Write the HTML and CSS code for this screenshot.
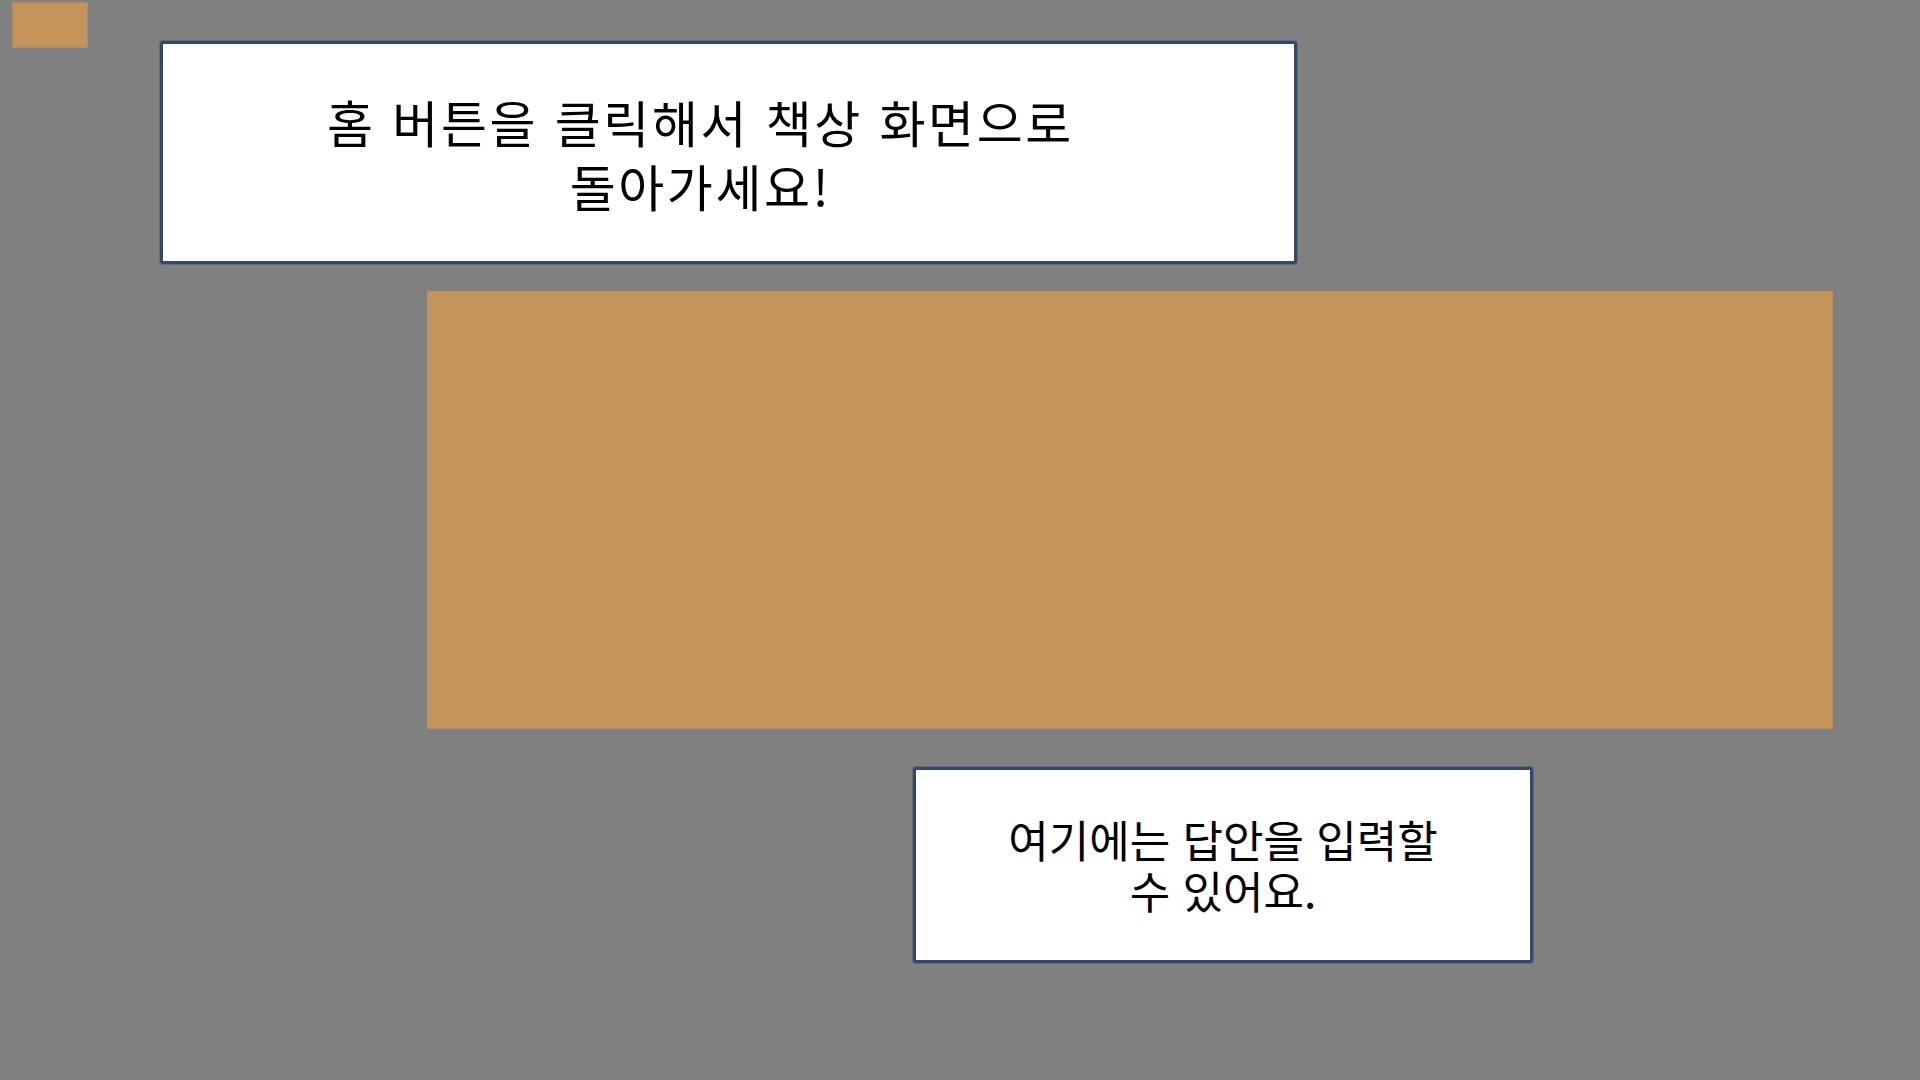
FILE: index.html
```html
<!DOCTYPE html>
<html lang="ko">

<head>
    <meta charset="UTF-8">
    <meta name="viewport" content="width=device-width, initial-scale=1.0">
    <title>책상</title>
    <link rel="stylesheet" href="styles.css">
</head>

<body>
    <div class="stage">
        <div class="homebtn"></div>

        <div class="note note-top">
            <p>홈 버튼을 클릭해서 책상 화면으로<br>돌아가세요!</p>
        </div>

        <div class="board"></div>

        <div class="note note-bottom">
            <p>여기에는 답안을 입력할<br>수 있어요.</p>
        </div>
    </div>
</body>

</html>
```

FILE: styles.css
```css
* {
    margin: 0;
    padding: 0;
    box-sizing: border-box;
}

body {
    width: 1920px;
    height: 1080px;
    overflow: hidden;
    background-color: #808080;
    font-family: "Noto Sans CJK KR", "Noto Sans", sans-serif;
    color: #000;
}

.stage {
    position: relative;
    padding-top: 41px;
}

/* 왼쪽 위 홈 버튼 */
.homebtn {
    position: absolute;
    top: 2px;
    left: 12px;
    width: 76px;
    height: 46px;
    background-color: #c4955a;
    border: 2px solid #b38e63;
}

.note {
    display: flex;
    align-items: center;
    justify-content: center;
    text-align: center;
    background-color: #fff;
    border: 3px solid #33476a;
    border-radius: 3px;
    box-shadow: 0 0 0 1px rgba(51, 71, 106, 0.35), inset 0 0 0 1px rgba(255, 255, 255, 0.6);
}

.note-top {
    width: 1137px;
    height: 223px;
    margin-left: 160px;
    padding-right: 56px;
    padding-top: 1px;
}

.note-top p {
    font-size: 50px;
    line-height: 64px;
    letter-spacing: 2.6px;
}

.board {
    width: 1406px;
    height: 438px;
    margin-top: 27px;
    margin-left: 427px;
    background-color: #c4955a;
    border: 1px solid #b8905f;
}

.note-bottom {
    width: 620px;
    height: 196px;
    margin-top: 38px;
    margin-left: 913px;
}

.note-bottom p {
    font-size: 44px;
    line-height: 51px;
}
```
